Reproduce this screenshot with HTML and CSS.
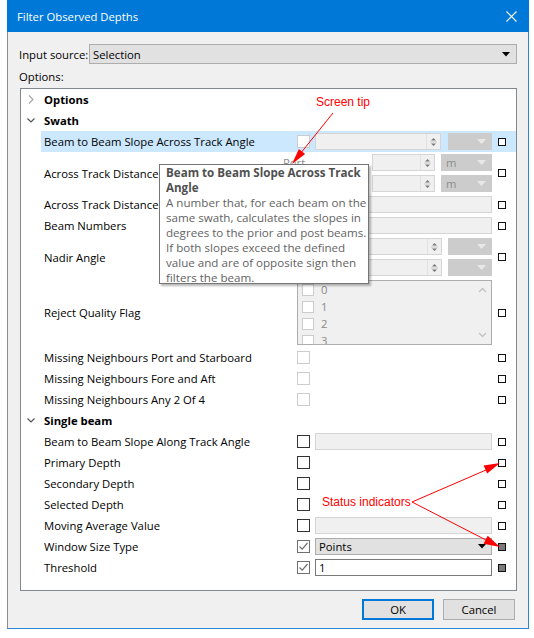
FILE: index.html
```html
<!DOCTYPE html>
<html>
<head>
<meta charset="utf-8">
<link rel="stylesheet" href="styles.css">
</head>
<body>
<div class="screen">
  <div class="dialog">
    <div class="titlebar">
      <span class="title">Filter Observed Depths</span>
      <svg class="close" width="11" height="11" viewBox="0 0 11 11"><path d="M0.5 0.5 L10.5 10.5 M10.5 0.5 L0.5 10.5" stroke="#fff" stroke-width="1.1" fill="none"/></svg>
    </div>
    <div class="body">
      <div class="source-row">
        <span class="source-label">Input source:</span>
        <div class="combo-src"><span>Selection</span><svg width="8" height="5" viewBox="0 0 8 5"><path d="M0 0 H8 L4 4.5 Z" fill="#000"/></svg></div>
      </div>
      <div class="options-label">Options:</div>
      <div class="tree">
        <div class="cat"><svg class="chev" width="8" height="9" viewBox="0 0 8 9"><path d="M2 0.5 L6 4.5 L2 8.5" stroke="#a6a6a6" stroke-width="1.2" fill="none"/></svg><span>Options</span></div>
        <div class="cat"><svg class="chev" width="8" height="9" viewBox="0 0 8 9"><path d="M0.5 2.5 L4 6 L7.5 2.5" stroke="#555" stroke-width="1.2" fill="none"/></svg><span>Swath</span></div>

        <div class="row sel">
          <div class="lbl">Beam to Beam Slope Across Track Angle</div>
          <div class="cbcell"><div class="cb dis"></div></div>
          <div class="ctl">
            <div class="spin w126"><span class="sa"><svg width="7" height="12" viewBox="0 0 7 12"><path d="M1 4.5 L3.5 2 L6 4.5 Z M1 7.5 L3.5 10 L6 7.5 Z" fill="#7a7a7a"/><path d="M0 6 H7" stroke="#c8c8c8"/></svg></span></div>
            <div class="combo dis w44"><svg class="darr" width="9" height="5" viewBox="0 0 9 5"><path d="M0 0 H9 L4.5 5 Z" fill="#e8e8e8"/></svg></div>
          </div>
          <div class="indcell"><div class="ind"></div></div>
        </div>

        <div class="row tall">
          <div class="lbl">Across Track Distance Port and Starboard</div>
          <div class="pair">
            <div class="sub"><span class="sublbl">Port</span>
              <div class="spin w63"><span class="sa"><svg width="7" height="12" viewBox="0 0 7 12"><path d="M1 4.5 L3.5 2 L6 4.5 Z M1 7.5 L3.5 10 L6 7.5 Z" fill="#7a7a7a"/><path d="M0 6 H7" stroke="#c8c8c8"/></svg></span></div>
              <div class="combo dis w51"><span class="cval">m</span><svg class="darr" width="9" height="5" viewBox="0 0 9 5"><path d="M0 0 H9 L4.5 5 Z" fill="#e8e8e8"/></svg></div>
            </div>
            <div class="sub"><span class="sublbl">Starboard</span>
              <div class="spin w63"><span class="sa"><svg width="7" height="12" viewBox="0 0 7 12"><path d="M1 4.5 L3.5 2 L6 4.5 Z M1 7.5 L3.5 10 L6 7.5 Z" fill="#7a7a7a"/><path d="M0 6 H7" stroke="#c8c8c8"/></svg></span></div>
              <div class="combo dis w51"><span class="cval">m</span><svg class="darr" width="9" height="5" viewBox="0 0 9 5"><path d="M0 0 H9 L4.5 5 Z" fill="#e8e8e8"/></svg></div>
            </div>
          </div>
          <div class="indcell"><div class="ind"></div></div>
        </div>

        <div class="row">
          <div class="lbl">Across Track Distance Fore and Aft</div>
          <div class="cbcell"><div class="cb dis"></div></div>
          <div class="ctl"><div class="field"></div></div>
          <div class="indcell"><div class="ind"></div></div>
        </div>

        <div class="row">
          <div class="lbl">Beam Numbers</div>
          <div class="cbcell"><div class="cb dis"></div></div>
          <div class="ctl"><div class="field"></div></div>
          <div class="indcell"><div class="ind"></div></div>
        </div>

        <div class="row tall">
          <div class="lbl">Nadir Angle</div>
          <div class="pair">
            <div class="sub">
              <div class="spin w126"><span class="sa"><svg width="7" height="12" viewBox="0 0 7 12"><path d="M1 4.5 L3.5 2 L6 4.5 Z M1 7.5 L3.5 10 L6 7.5 Z" fill="#7a7a7a"/><path d="M0 6 H7" stroke="#c8c8c8"/></svg></span></div>
              <div class="combo dis w44"><svg class="darr" width="9" height="5" viewBox="0 0 9 5"><path d="M0 0 H9 L4.5 5 Z" fill="#e8e8e8"/></svg></div>
            </div>
            <div class="sub">
              <div class="spin w126"><span class="sa"><svg width="7" height="12" viewBox="0 0 7 12"><path d="M1 4.5 L3.5 2 L6 4.5 Z M1 7.5 L3.5 10 L6 7.5 Z" fill="#7a7a7a"/><path d="M0 6 H7" stroke="#c8c8c8"/></svg></span></div>
              <div class="combo dis w44"><svg class="darr" width="9" height="5" viewBox="0 0 9 5"><path d="M0 0 H9 L4.5 5 Z" fill="#e8e8e8"/></svg></div>
            </div>
          </div>
          <div class="indcell"><div class="ind"></div></div>
        </div>

        <div class="row list-row">
          <div class="lbl">Reject Quality Flag</div>
          <div class="list">
            <div class="items">
              <div class="item"><span class="lcb"></span><span>0</span></div>
              <div class="item"><span class="lcb"></span><span>1</span></div>
              <div class="item"><span class="lcb"></span><span>2</span></div>
              <div class="item"><span class="lcb"></span><span>3</span></div>
            </div>
            <div class="scroll">
              <svg width="9" height="6" viewBox="0 0 9 6"><path d="M1 5 L4.5 1.5 L8 5" stroke="#c2c2c2" stroke-width="1.3" fill="none"/></svg>
              <svg width="9" height="6" viewBox="0 0 9 6"><path d="M1 1 L4.5 4.5 L8 1" stroke="#c2c2c2" stroke-width="1.3" fill="none"/></svg>
            </div>
          </div>
          <div class="indcell"><div class="ind"></div></div>
        </div>

        <div class="row">
          <div class="lbl">Missing Neighbours Port and Starboard</div>
          <div class="cbcell"><div class="cb dis"></div></div>
          <div class="ctl"></div>
          <div class="indcell"><div class="ind"></div></div>
        </div>
        <div class="row">
          <div class="lbl">Missing Neighbours Fore and Aft</div>
          <div class="cbcell"><div class="cb dis"></div></div>
          <div class="ctl"></div>
          <div class="indcell"><div class="ind"></div></div>
        </div>
        <div class="row">
          <div class="lbl">Missing Neighbours Any 2 Of 4</div>
          <div class="cbcell"><div class="cb dis"></div></div>
          <div class="ctl"></div>
          <div class="indcell"><div class="ind"></div></div>
        </div>

        <div class="cat"><svg class="chev" width="8" height="9" viewBox="0 0 8 9"><path d="M0.5 2.5 L4 6 L7.5 2.5" stroke="#555" stroke-width="1.2" fill="none"/></svg><span>Single beam</span></div>

        <div class="row">
          <div class="lbl">Beam to Beam Slope Along Track Angle</div>
          <div class="cbcell"><div class="cb"></div></div>
          <div class="ctl"><div class="field"></div></div>
          <div class="indcell"><div class="ind"></div></div>
        </div>
        <div class="row">
          <div class="lbl">Primary Depth</div>
          <div class="cbcell"><div class="cb"></div></div>
          <div class="ctl"></div>
          <div class="indcell"><div class="ind"></div></div>
        </div>
        <div class="row">
          <div class="lbl">Secondary Depth</div>
          <div class="cbcell"><div class="cb"></div></div>
          <div class="ctl"></div>
          <div class="indcell"><div class="ind"></div></div>
        </div>
        <div class="row">
          <div class="lbl">Selected Depth</div>
          <div class="cbcell"><div class="cb"></div></div>
          <div class="ctl"></div>
          <div class="indcell"><div class="ind"></div></div>
        </div>
        <div class="row">
          <div class="lbl">Moving Average Value</div>
          <div class="cbcell"><div class="cb"></div></div>
          <div class="ctl"><div class="field"></div></div>
          <div class="indcell"><div class="ind"></div></div>
        </div>
        <div class="row">
          <div class="lbl">Window Size Type</div>
          <div class="cbcell"><div class="cb on"><svg width="11" height="11" viewBox="0 0 11 11"><path d="M1.5 5.5 L4.2 8.2 L9.5 2" stroke="#6f6f6f" stroke-width="1.2" fill="none"/></svg></div></div>
          <div class="ctl"><div class="combo-en"><span>Points</span><svg width="8" height="5" viewBox="0 0 8 5"><path d="M0 0 H8 L4 4.5 Z" fill="#000"/></svg></div></div>
          <div class="indcell"><div class="ind on"></div></div>
        </div>
        <div class="row">
          <div class="lbl">Threshold</div>
          <div class="cbcell"><div class="cb on"><svg width="11" height="11" viewBox="0 0 11 11"><path d="M1.5 5.5 L4.2 8.2 L9.5 2" stroke="#6f6f6f" stroke-width="1.2" fill="none"/></svg></div></div>
          <div class="ctl"><div class="field en"><span>1</span></div></div>
          <div class="indcell"><div class="ind on"></div></div>
        </div>
      </div>
      <div class="buttons">
        <div class="btn default">OK</div>
        <div class="btn">Cancel</div>
      </div>
    </div>
  </div>

  <div class="tooltip">
    <div class="tt-title">Beam to Beam Slope Across Track<br>Angle</div>
    <div class="tt-body">A number that, for each beam on the<br>same swath, calculates the slopes in<br>degrees to the prior and post beams.<br>If both slopes exceed the defined<br>value and are of opposite sign then<br>filters the beam.</div>
  </div>

  <svg class="annot" width="534" height="638" viewBox="0 0 534 638">
    <path d="M333 113 L300 154" stroke="#ff0000" stroke-width="1" fill="none"/>
    <path d="M292 164 L305.1 154 L298.9 149 Z" fill="#ff0000"/>
    <path d="M412 502 L486 470" stroke="#ff0000" stroke-width="1" fill="none"/>
    <path d="M500 463 L487.2 473.6 L483.6 465.4 Z" fill="#ff0000"/>
    <path d="M412 502 L486 540" stroke="#ff0000" stroke-width="1" fill="none"/>
    <path d="M500 547 L483.6 543.7 L487.7 535.7 Z" fill="#ff0000"/>
  </svg>
  <span class="note note-tip">Screen tip</span>
  <span class="note note-status">Status indicators</span>
</div>
</body>
</html>
```
FILE: styles.css
```css
* { box-sizing: border-box; }
body { margin: 0; }
.screen {
  position: relative;
  width: 534px;
  height: 638px;
  background: #ffffff;
  font-family: "Open Sans", "Noto Sans", sans-serif;
  font-size: 11.3px;
  color: #000;
  overflow: hidden;
}
.dialog {
  margin-left: 7px;
  width: 522px;
  height: 629px;
  display: flex;
  flex-direction: column;
}
.titlebar {
  height: 32px;
  flex: none;
  background: #0078d7;
  color: #fff;
  display: flex;
  align-items: center;
  justify-content: space-between;
  padding: 0 12px 0 10px;
}
.title { font-size: 11.3px; }
.close { display: block; }
.body {
  flex: 1;
  background: #f0f0f0;
  border: 1px solid #8c8c8c;
  border-top: none;
  border-right-color: #2b83d3;
  border-bottom-color: #2b83d3;
  padding: 12px 11px 8px 12px;
  display: flex;
  flex-direction: column;
}
.source-row {
  height: 20px;
  display: flex;
  align-items: center;
}
.source-label { width: 70px; margin-left: -1px; }
.combo-src {
  flex: 1;
  height: 20px;
  background: #e1e1e1;
  border: 1px solid #adadad;
  display: flex;
  align-items: center;
  justify-content: space-between;
  padding: 0 6px 0 3px;
}
.combo-src svg { display: block; }
.options-label {
  margin-top: 5px;
  height: 16px;
  line-height: 16px;
  margin-left: -1px;
}
.tree {
  margin-top: 3px;
  height: 503px;
  flex: none;
  background: #fff;
  border: 1px solid #828790;
  display: flex;
  flex-direction: column;
}
.cat {
  height: 21px;
  flex: none;
  display: flex;
  align-items: center;
  padding-left: 6px;
  font-weight: 700;
}
.chev { display: block; margin-right: 9px; }
.row {
  height: 21px;
  flex: none;
  margin-left: 20px;
  display: grid;
  grid-template-columns: 256px 18px 177px 23px;
  align-items: center;
}
.row.sel { background: #cce8ff; }
.row.tall { height: 42px; }
.row.list-row { height: 69px; }
.lbl {
  padding-left: 3px;
  white-space: nowrap;
  overflow: hidden;
}
.cbcell { display: flex; align-items: center; }
.cb {
  width: 13px;
  height: 13px;
  border: 1px solid #333333;
  background: #fff;
}
.cb.dis { border-color: #cccccc; }
.cb.on { border-color: #6f6f6f; }
.cb svg { display: block; }
.ctl {
  display: flex;
  align-items: center;
  gap: 7px;
  height: 17px;
}
.spin {
  height: 17px;
  border: 1px solid #d5d5d5;
  background: #f0f0f0;
  display: flex;
  justify-content: flex-end;
}
.spin .sa {
  width: 14px;
  border-left: 1px solid #e2e2e2;
  display: flex;
  align-items: center;
  justify-content: center;
}
.spin svg { display: block; }
.w126 { width: 126px; }
.w63 { width: 63px; }
.w44 { width: 44px; }
.w51 { width: 51px; }
.combo {
  height: 17px;
  display: flex;
  align-items: center;
  justify-content: space-between;
  padding: 0 5px 0 4px;
}
.combo.dis { background: #cccccc; border: 1px solid #cccccc; }
.combo .darr { display: block; margin-left: auto; }
.cval { color: #8e8e8e; }
.field {
  width: 177px;
  height: 17px;
  border: 1px solid #d5d5d5;
  background: #f0f0f0;
  display: flex;
  align-items: center;
  padding-left: 3px;
}
.field.en { background: #fff; border-color: #7a7a7a; }
.combo-en {
  width: 177px;
  height: 17px;
  background: #e1e1e1;
  border: 1px solid #adadad;
  display: flex;
  align-items: center;
  justify-content: space-between;
  padding: 0 5px 0 3px;
}
.combo-en svg { display: block; }
.indcell { display: flex; align-items: center; padding-left: 6px; }
.ind {
  width: 8px;
  height: 8px;
  border: 1.5px solid #111;
  background: #fff;
}
.ind.on { background: #7a7a7a; }
.pair {
  grid-column: 2 / 4;
  display: flex;
  flex-direction: column;
}
.sub {
  height: 21px;
  display: flex;
  align-items: center;
  justify-content: flex-end;
  gap: 6px;
}
.sublbl {
  margin-right: auto;
  margin-left: -14px;
  color: #8e8e8e;
}
.list {
  grid-column: 2 / 4;
  height: 65px;
  border: 1px solid #adadad;
  background: #f0f0f0;
  display: flex;
  overflow: hidden;
}
.items {
  flex: 1;
  padding-left: 4px;
  display: flex;
  flex-direction: column;
}
.item {
  height: 17px;
  flex: none;
  display: flex;
  align-items: center;
  color: #8a8a8a;
}
.lcb {
  width: 12px;
  height: 12px;
  border: 1px solid #cccccc;
  background: #fff;
  margin-right: 7px;
}
.scroll {
  width: 17px;
  display: flex;
  flex-direction: column;
  justify-content: space-between;
  align-items: center;
  padding: 6px 0 6px;
}
.scroll svg { display: block; }
.buttons {
  margin-top: 8px;
  display: flex;
  justify-content: flex-end;
  gap: 9px;
  padding-right: 2px;
}
.btn {
  width: 72px;
  height: 21px;
  border: 1px solid #adadad;
  background: #e1e1e1;
  display: flex;
  align-items: center;
  justify-content: center;
}
.btn.default { border: 2px solid #0078d7; }
.tooltip {
  position: absolute;
  left: 159px;
  top: 164px;
  width: 210px;
  height: 120px;
  background: #fff;
  border: 1px solid #767676;
  box-shadow: 2px 2px 2px rgba(0, 0, 0, 0.28);
  padding: 0 0 0 6px;
  font-size: 11.6px;
  line-height: 15px;
  white-space: nowrap;
}
.tt-title { font-weight: 700; color: #505050; }
.tt-body { color: #636363; }
.annot { position: absolute; left: 0; top: 0; }
.note {
  position: absolute;
  font-family: "Liberation Sans", Arial, sans-serif;
  font-size: 12px;
  color: #ff0000;
  line-height: 14px;
  white-space: nowrap;
}
.note-tip { left: 316px; top: 95px; }
.note-status { left: 322px; top: 495px; }
```
